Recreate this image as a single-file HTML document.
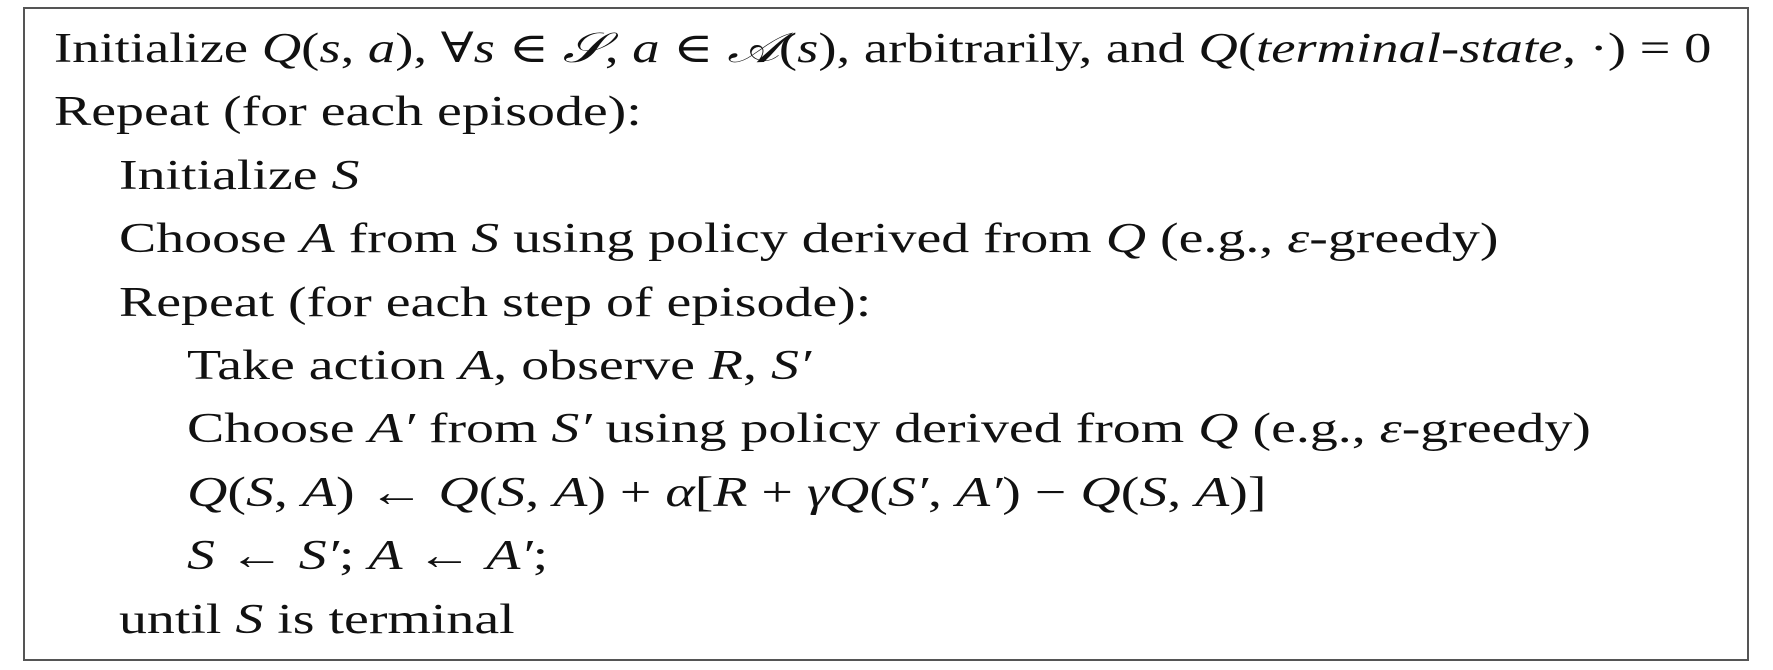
<!DOCTYPE html>
<html><head><meta charset="utf-8"><style>
html,body{margin:0;padding:0;background:#fff;}
body{width:1773px;height:670px;position:relative;overflow:hidden;font-family:"Liberation Serif","DejaVu Serif",serif;color:#111;}
.box{position:absolute;left:23px;top:7px;width:1722px;height:650px;border:2px solid #555;box-sizing:content-box;}
.l{position:absolute;white-space:nowrap;font-size:42px;line-height:1;transform:scaleX(1.33);transform-origin:0 0;}
i{font-style:italic;}
</style></head><body>
<div class="box"></div>
<div class="l" style="left:54px;top:28px;transform:scaleX(1.30)">Initialize <i>Q</i>(<i>s</i>, <i>a</i>), ∀<i>s</i> ∈ <i>𝒮</i>, <i>a</i> ∈ <i>𝒜</i>(<i>s</i>), arbitrarily, and <i>Q</i>(<i>terminal-state</i>, ·) = 0</div>
<div class="l" style="left:54px;top:91px">Repeat (for each episode):</div>
<div class="l" style="left:119px;top:155px">Initialize <i>S</i></div>
<div class="l" style="left:119px;top:218px">Choose <i>A</i> from <i>S</i> using policy derived from <i>Q</i> (e.g., <i>ε</i>-greedy)</div>
<div class="l" style="left:119px;top:282px">Repeat (for each step of episode):</div>
<div class="l" style="left:187px;top:345px">Take action <i>A</i>, observe <i>R</i>, <i>S′</i></div>
<div class="l" style="left:187px;top:408px">Choose <i>A′</i> from <i>S′</i> using policy derived from <i>Q</i> (e.g., <i>ε</i>-greedy)</div>
<div class="l" style="left:187px;top:472px"><i>Q</i>(<i>S</i>, <i>A</i>) ← <i>Q</i>(<i>S</i>, <i>A</i>) + <i>α</i>[<i>R</i> + <i>γQ</i>(<i>S′</i>, <i>A′</i>) − <i>Q</i>(<i>S</i>, <i>A</i>)]</div>
<div class="l" style="left:187px;top:535px"><i>S</i> ← <i>S′</i>; <i>A</i> ← <i>A′</i>;</div>
<div class="l" style="left:119px;top:599px">until <i>S</i> is terminal</div>
</body></html>
